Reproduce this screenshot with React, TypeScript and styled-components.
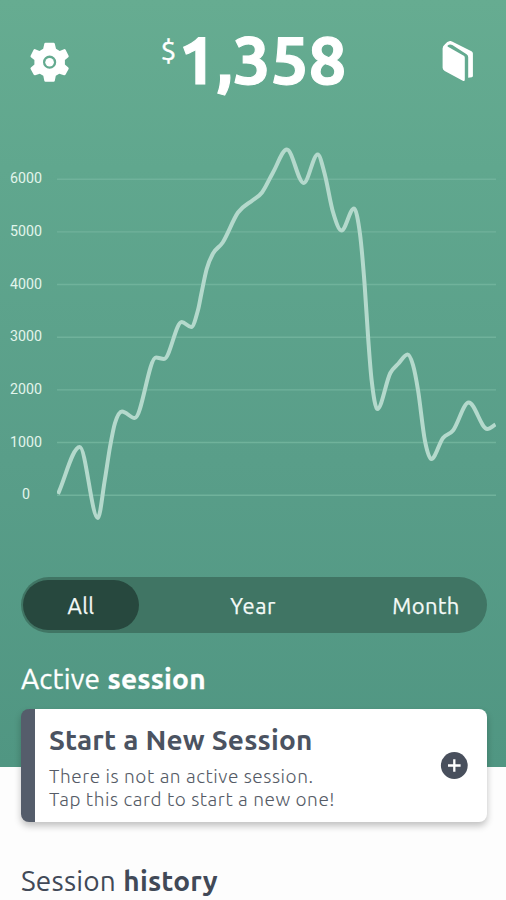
import React from "react";
import styled, { createGlobalStyle } from "styled-components";

const GlobalStyle = createGlobalStyle`
  * { box-sizing: border-box; }
  body { margin: 0; background: #fdfdfd; font-family: Ubuntu, "Noto Sans", sans-serif; }
  h1, h2, h3, p { margin: 0; }
  button { border: 0; padding: 0; background: none; font: inherit; color: inherit; }
  svg { display: block; }
`;

const Screen = styled.main`
  width: 506px;
  height: 900px;
  overflow: hidden;
  background: linear-gradient(#66ac91, #60a78e 22%, #599e89 60%, #509682 100%) 0 0 / 100% 767px no-repeat #fdfdfd;
`;

const Header = styled.header`
  height: 126px;
  padding: 0 32px 0 30px;
  display: flex;
  justify-content: space-between;
  color: #fff;
`;

const IconButton = styled.button<{ $top: number }>`
  height: 42px;
  margin-top: ${(p) => p.$top}px;
`;

const Balance = styled.h1`
  display: flex;
  margin-left: -4px;
  padding-top: 14.5px;
  height: 106px;
  font-size: 67px;
  line-height: 90px;
  letter-spacing: 0.1px;
  font-weight: 700;
  -webkit-text-stroke: 1.1px #fff;
`;

const Currency = styled.span`
  margin-right: 2px;
  padding-top: 18px;
  font-size: 28px;
  line-height: 36px;
  font-weight: 400;
  -webkit-text-stroke: 0.4px #fff;
`;

const Chart = styled.section`
  display: flex;
  height: 451px;
`;

const Axis = styled.div`
  width: 57px;
  padding: 26.3px 5px 0 0;
  font: 400 14.2px/52.67px Roboto, sans-serif;
  color: #e2f5ec;
`;

const Tick = styled.div`
  width: 52px;
  height: 52.67px;
  text-align: center;
`;

const Periods = styled.nav`
  height: 56px;
  margin: 0 19px 0 21px;
  padding: 3px 2px;
  display: flex;
  justify-content: space-between;
  border-radius: 28px;
  background: #407564;
  color: #f4faf7;
`;

const Period = styled.button<{ $active?: boolean; $width: number; $spacing: number }>`
  width: ${(p) => p.$width}px;
  height: 50px;
  border-radius: 25px;
  background: ${(p) => (p.$active ? "#27483e" : "transparent")};
  font-size: 22px;
  line-height: 52px;
  letter-spacing: ${(p) => p.$spacing}px;
  -webkit-text-stroke: 0.25px currentColor;
`;

const SectionTitle = styled.h2<{ $dark?: boolean; $gap: number }>`
  height: 40px;
  margin: ${(p) => p.$gap}px 21px 0;
  font-size: 28px;
  line-height: 40px;
  font-weight: 400;
  letter-spacing: 0.2px;
  white-space: nowrap;
  color: ${(p) => (p.$dark ? "#414957" : "#fff")};
  -webkit-text-stroke: ${(p) => (p.$dark ? 0 : 0.3)}px currentColor;
  strong { font-weight: 700; margin-left: 0.7px; }
`;

const Card = styled.article`
  height: 113px;
  margin: 10px 19px 0 21px;
  padding: 11px 19px 0 14px;
  display: flex;
  justify-content: space-between;
  border-left: 14px solid #555d6b;
  border-radius: 8px;
  background: #fff;
  box-shadow: 0 4px 7px rgba(0, 0, 0, 0.24);
`;

const CardTitle = styled.h3`
  margin-bottom: 6px;
  font-size: 28px;
  line-height: 39px;
  font-weight: 700;
  letter-spacing: 0.2px;
  color: #4b5361;
`;

const CardText = styled.p`
  font-size: 19px;
  line-height: 23px;
  font-weight: 300;
  letter-spacing: 0.54px;
  color: #555b66;
`;

const AddButton = styled.button`
  height: 28px;
  margin-top: 32px;
`;

const ticks = [6000, 5000, 4000, 3000, 2000, 1000, 0];

type Point = [number, number];

const history: Point[] = [
  [1, 368], [22.7, 321], [40.8, 392], [47.8, 354], [53, 321], [58, 297], [65, 285.5], [77.7, 292],
  [99, 231.5], [107, 233], [124.7, 196], [134.2, 201], [141, 184], [144.3, 168], [149.7, 143],
  [156, 127.5], [165.7, 116.5], [181, 86.5], [196, 74], [205, 66.5], [216, 46.5],
  [229.9, 23.5], [246.7, 57], [260.7, 28.5], [267.7, 48], [276, 86], [284.5, 104.5], [297, 82.5],
  [303, 108], [307.5, 157], [311.3, 214], [314.6, 254], [320.3, 283], [333.3, 247],
  [341, 238], [350.6, 228.5], [356, 239], [361, 264], [368, 315], [374.3, 333], [386, 312],
  [396, 304.5], [411.7, 276.5], [430.3, 303], [438.5, 298.5],
];

// Smooth curve whose peaks and troughs fall exactly on the data points.
function smoothPath(points: Point[]): string {
  const slopes = points.slice(1).map(([x, y], i) => (y - points[i][1]) / (x - points[i][0]));
  const tangents = points.map((_, i) => {
    if (i === 0) return slopes[0];
    if (i === slopes.length) return slopes[i - 1];
    const a = slopes[i - 1];
    const b = slopes[i];
    return a * b <= 0 ? 0 : Math.sign(a) * Math.min(Math.abs(a + b) / 2, 2.6 * Math.min(Math.abs(a), Math.abs(b)));
  });
  return points.reduce((d, [x, y], i) => {
    if (i === 0) return `M${x},${y}`;
    const [px, py] = points[i - 1];
    const h = (x - px) / 3;
    return `${d}C${px + h},${py + tangents[i - 1] * h} ${x - h},${y - tangents[i] * h} ${x},${y}`;
  }, "");
}

const GearIcon = () => (
  <svg width="40" height="42" viewBox="0 0 40 42" fill="currentColor">
    <path
      fillRule="evenodd"
      d="M15.5 1.8H23.6Q24.6 1.8 24.8 2.8L26 7.8L29.7 10L34 8.2Q35 7.8 35.6 8.7L38.6 14.8Q39 15.7 38.3 16.3L34.9 19V23.6L38.3 26.4Q39 27 38.6 27.9L35.6 33.6Q35 34.5 34 34.2L29.3 32.7L25.8 34.8L24.8 39.7Q24.6 40.7 23.6 40.7H15.5Q14.5 40.7 14.3 39.7L13.3 34.8L9.8 32.7L5.2 34.2Q4.2 34.5 3.6 33.6L.6 27.9Q.2 27 .9 26.4L4.4 23.6V19L.9 16.3Q.2 15.7 .6 14.8L3.6 8.7Q4.2 7.8 5.2 8.2L9.5 10L13.2 7.8L14.3 2.8Q14.5 1.8 15.5 1.8Z M19.6 14.6a6.6 6.6 0 1 0 0 13.2a6.6 6.6 0 1 0 0-13.2Z"
    />
    <circle cx="19.6" cy="21.2" r="4.3" />
  </svg>
);

const BookIcon = () => (
  <svg width="33" height="42" viewBox="0 0 33 42" fill="currentColor">
    <path d="M4 4.3Q6 1.6 9 1.1Q10 .9 11 1.4L30.5 11.3Q31.9 12.1 31.9 13.5V36Q31.9 37 30.8 37.2L27.2 37.7V17.2Q27.2 15.2 25.6 14.3L11.3 5.1Q9 3.7 6.6 5.4Q6.2 6.4 7.4 7.1L22.8 15.8Q23.8 16.5 23.8 17.8V39.6Q23.8 41.8 21.8 40.8L3.7 31Q1.6 29.8 1.6 27.7V8.5Q1.6 6 4 4.3Z" />
  </svg>
);

export default function App() {
  return (
    <Screen>
      <GlobalStyle />
      <Header>
        <IconButton $top={41} aria-label="Settings"><GearIcon /></IconButton>
        <Balance><Currency>$</Currency>1,358</Balance>
        <IconButton $top={40} aria-label="Guide"><BookIcon /></IconButton>
      </Header>
      <Chart>
        <Axis>{ticks.map((t) => <Tick key={t}>{t}</Tick>)}</Axis>
        <svg width="439" height="451" viewBox="0 0 439 451">
          {ticks.map((t, i) => (
            <path key={t} d={`M0 ${53.2 + i * 52.67}H439`} stroke="#70b29b" strokeWidth="1.4" />
          ))}
          <path d={smoothPath(history)} fill="none" stroke="#b4d9cc" strokeWidth="4" strokeLinejoin="round" />
        </svg>
      </Chart>
      <Periods>
        <Period $active $width={116} $spacing={0.4}>All</Period>
        <Period $width={117} $spacing={0.5}>Year</Period>
        <Period $width={118} $spacing={0.3}>Month</Period>
      </Periods>
      <SectionTitle $gap={26}>Active <strong>session</strong></SectionTitle>
      <Card>
        <div>
          <CardTitle>Start a New Session</CardTitle>
          <CardText>There is not an active session.</CardText>
          <CardText>Tap this card to start a new one!</CardText>
        </div>
        <AddButton aria-label="Start session">
          <svg width="28" height="28" viewBox="0 0 28 28">
            <circle cx="14.3" cy="13.5" r="13.4" fill="#484f5c" />
            <path d="M14.3 7.2V19.8M8 13.5H20.6" stroke="#fff" strokeWidth="2.3" />
          </svg>
        </AddButton>
      </Card>
      <SectionTitle $dark $gap={39}>Session <strong>history</strong></SectionTitle>
    </Screen>
  );
}
